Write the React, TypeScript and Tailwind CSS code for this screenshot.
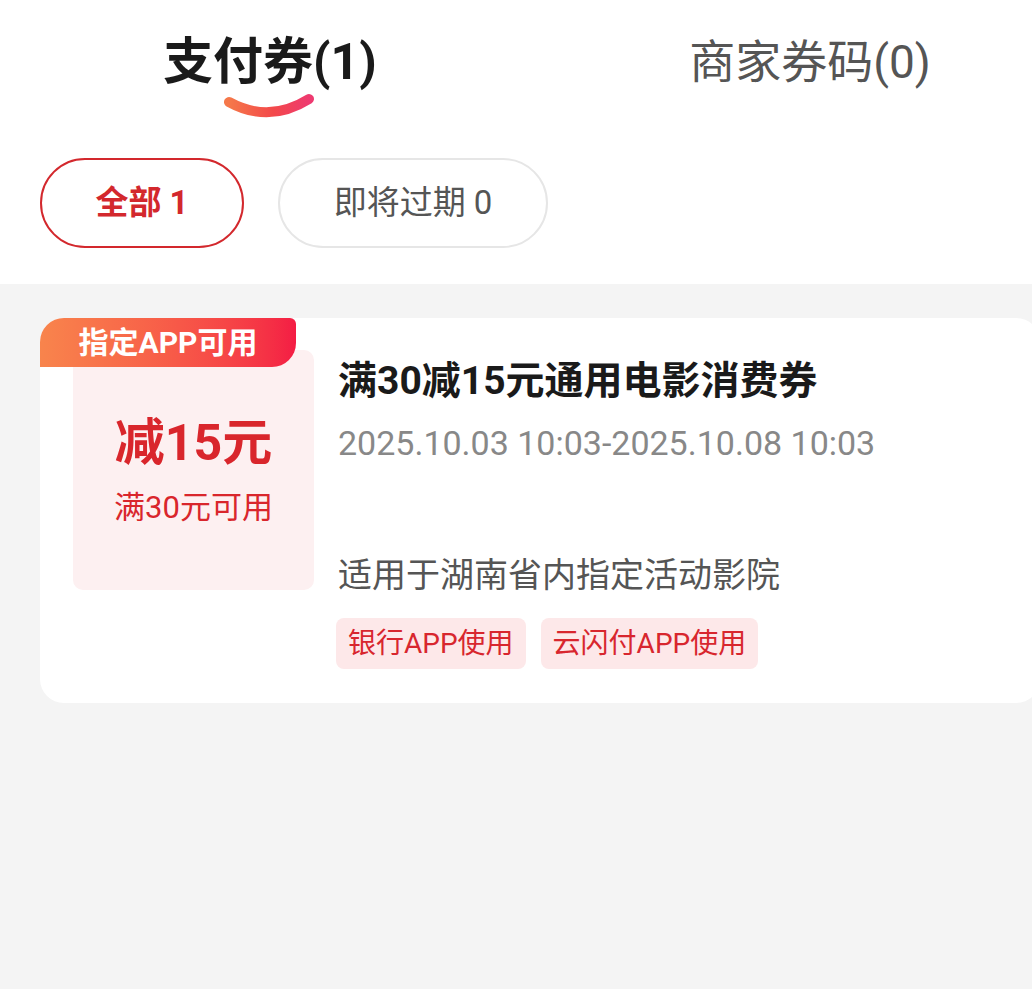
import React from "react";

const font = { fontFamily: "Roboto, 'Noto Sans CJK SC', sans-serif" };

export default function App() {
  return (
    <div className="w-full h-[989px] overflow-hidden bg-[#f4f4f4]" style={font}>
      <div className="w-[1080px] min-h-[989px] flex flex-col bg-[#f4f4f4]">
        <div className="bg-white flex flex-col pb-[36px]">
          <div className="flex pt-[34px]">
            <div className="w-[540px] flex flex-col items-center">
              <div className="text-[50px] leading-[56px] font-bold text-[#1a1a1a]">支付券(1)</div>
              <svg width="92" height="26" viewBox="0 0 92 26" className="mt-[3px] ml-[-2px]">
                <defs>
                  <linearGradient id="ug" x1="0" y1="0" x2="1" y2="0">
                    <stop offset="0" stopColor="#f5784a" />
                    <stop offset="0.55" stopColor="#f3494a" />
                    <stop offset="1" stopColor="#ee3a70" />
                  </linearGradient>
                </defs>
                <path d="M6 9 Q46 31 86 6" stroke="url(#ug)" strokeWidth="10" strokeLinecap="round" fill="none" />
              </svg>
            </div>
            <div className="w-[540px] flex flex-col items-center">
              <div className="text-[46px] leading-[56px] text-[#555555]">商家券码(0)</div>
            </div>
          </div>
          <div className="flex gap-[34px] pl-[40px] mt-[39px]">
            <div className="w-[204px] h-[90px] rounded-full border-2 border-[#d3282d] flex items-center justify-center text-[33px] font-bold text-[#d3282d]">
              全部 1
            </div>
            <div className="w-[270px] h-[90px] rounded-full border-2 border-[#e6e6e6] flex items-center justify-center text-[33px] text-[#555555]">
              即将过期 0
            </div>
          </div>
        </div>

        <div className="ml-[40px] mt-[34px] w-[1000px] rounded-[24px] bg-white relative flex pl-[33px] pt-[32px] pb-[34px]">
          <div className="absolute left-0 top-0 h-[49px] w-[256px] rounded-tl-[24px] rounded-br-[24px] rounded-tr-[6px] bg-gradient-to-r from-[#f8844c] to-[#f41c44] flex items-center justify-center text-white font-bold text-[30px] z-10">
            指定APP可用
          </div>
          <div className="w-[241px] h-[240px] rounded-[10px] bg-[#fdf0f1] flex flex-col items-center pt-[64px]">
            <div className="text-[50px] leading-[58px] font-bold text-[#d9262c]">减15元</div>
            <div className="text-[31px] leading-[40px] text-[#d9262c] mt-[16px]">满30元可用</div>
          </div>
          <div className="ml-[22px] flex flex-col pt-[7px]">
            <div className="text-[39px] leading-[48px] font-bold text-[#1a1a1a] pl-[2px]">满30减15元通用电影消费券</div>
            <div className="text-[34px] leading-[44px] text-[#888888] mt-[16px] pl-[2px]">2025.10.03 10:03-2025.10.08 10:03</div>
            <div className="text-[34px] leading-[44px] text-[#555555] mt-[88px] pl-[2px]">适用于湖南省内指定活动影院</div>
            <div className="flex gap-[15px] mt-[21px]">
              <div className="h-[51px] px-[12px] rounded-[8px] bg-[#fde8e9] text-[#d8262e] text-[28px] flex items-center">银行APP使用</div>
              <div className="h-[51px] px-[12px] rounded-[8px] bg-[#fde8e9] text-[#d8262e] text-[28px] flex items-center">云闪付APP使用</div>
            </div>
          </div>
        </div>
      </div>
    </div>
  );
}
